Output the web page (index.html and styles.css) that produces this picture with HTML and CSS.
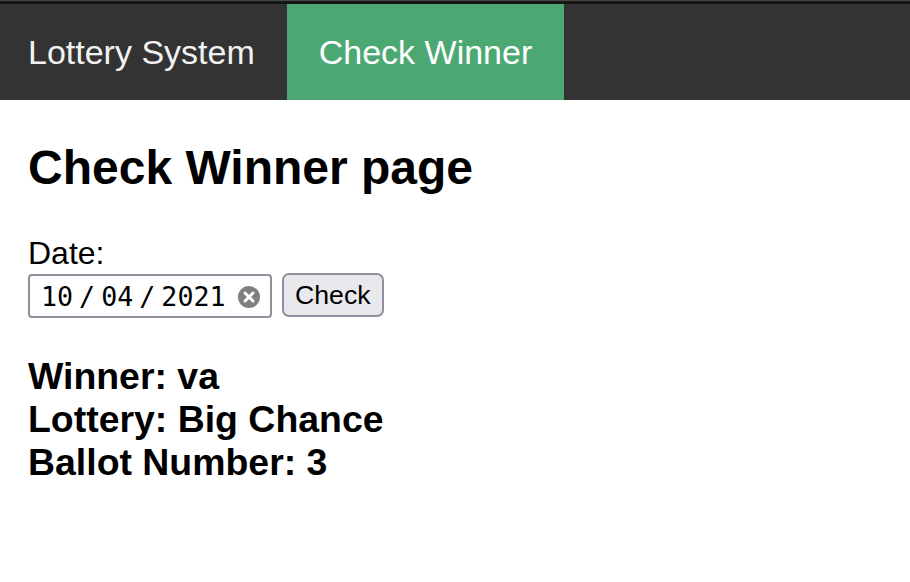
FILE: index.html
```html
<!DOCTYPE html>
<html lang="en">
<head>
<meta charset="utf-8">
<title>Check Winner</title>
<link rel="stylesheet" href="styles.css">
</head>
<body>
<div class="chrome"></div>
<nav class="topnav">
  <a class="nav-link brand" href="#">Lottery System</a>
  <a class="nav-link active" href="#">Check Winner</a>
</nav>
<main class="content">
  <h2 class="page-title">Check Winner page</h2>
  <form class="check-form">
    <label class="date-label">Date:</label>
    <div class="form-row">
      <div class="date-input">
        <span class="date-part">10</span><span class="date-sep">/</span><span class="date-part">04</span><span class="date-sep">/</span><span class="date-part">2021</span>
        <svg class="clear-icon" width="22" height="22" viewBox="0 0 22 22" aria-hidden="true">
          <circle cx="11" cy="11" r="11" fill="#7f7f7f"/>
          <path d="M7 7 L15 15 M15 7 L7 15" stroke="#ffffff" stroke-width="3" stroke-linecap="round"/>
        </svg>
      </div>
      <button class="check-btn" type="button">Check</button>
    </div>
  </form>
  <h3 class="result">Winner: va<br>Lottery: Big Chance<br>Ballot Number: 3</h3>
</main>
</body>
</html>
```
FILE: styles.css
```css
html, body {
  margin: 0;
  padding: 0;
  background: #ffffff;
}

body {
  font-family: "Liberation Sans", Arial, sans-serif;
  color: #000000;
}

.chrome {
  height: 1px;
  background: #474747;
}

.topnav {
  display: flex;
  background: #333333;
  border-top: 3px solid #161616;
}

.nav-link {
  display: block;
  padding: 28px 32px;
  font-size: 34px;
  line-height: 40px;
  color: #f2f2f2;
  text-decoration: none;
}

.brand {
  padding-left: 28px;
}

.active {
  background: #4ca873;
  color: #ffffff;
}

.content {
  padding: 0 28px;
}

.page-title {
  margin: 40px 0;
  font-size: 48px;
  line-height: 55px;
  font-weight: bold;
}

.check-form {
  margin: 0;
}

.date-label {
  display: block;
  font-size: 32px;
  line-height: 37px;
}

.form-row {
  display: flex;
  align-items: flex-start;
  gap: 10px;
  margin-top: 2px;
}

.date-input {
  box-sizing: border-box;
  width: 244px;
  height: 44px;
  display: flex;
  align-items: center;
  padding: 1px 10px 0 11px;
  border: 2px solid #8f8f9d;
  border-radius: 4px;
  background: #ffffff;
  font-family: "DejaVu Sans Mono", "Liberation Mono", monospace;
  font-size: 26.67px;
  line-height: 30px;
  color: #000000;
}

.date-sep {
  padding: 0 6px;
}

.clear-icon {
  margin-left: auto;
  flex: none;
}

.check-btn {
  box-sizing: border-box;
  height: 44px;
  margin-top: -1px;
  padding: 0 11px;
  border: 2px solid #8f8f9d;
  border-radius: 7px;
  background: #e9e9ed;
  font-family: "Liberation Sans", Arial, sans-serif;
  font-size: 26.67px;
  color: #000000;
}

.result {
  margin: 37px 0 0;
  font-size: 37.44px;
  line-height: 43px;
  font-weight: bold;
}
```
